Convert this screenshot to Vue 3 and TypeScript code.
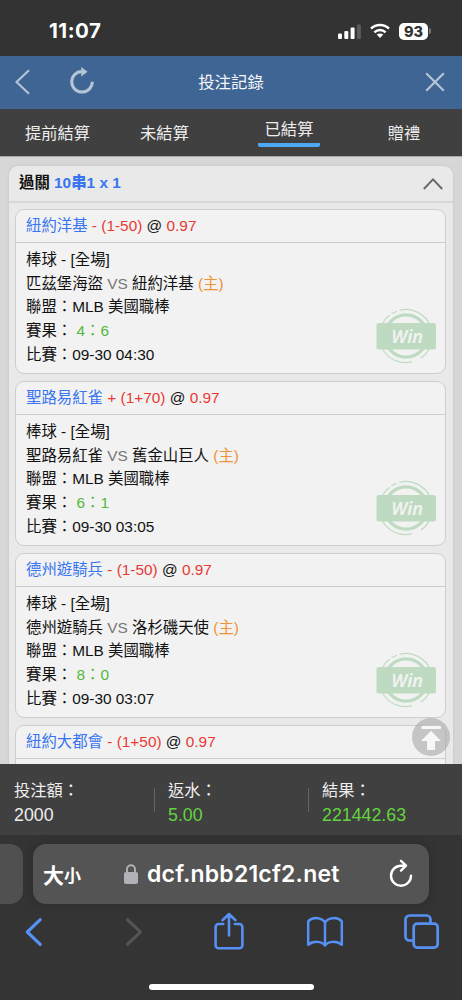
<script setup lang="ts">
interface Details {
  home: string
  away: string
  a: number
  b: number
  time: string
}
interface Bet {
  pick: string
  sign: string
  line: string
  details?: Details
}

const tabs: string[] = ['提前結算', '未結算', '已結算', '贈禮']
const activeTab = 2

const bets: Bet[] = [
  { pick: '紐約洋基', sign: '-', line: '(1-50)', details: { away: '匹茲堡海盜', home: '紐約洋基', a: 4, b: 6, time: '09-30 04:30' } },
  { pick: '聖路易紅雀', sign: '+', line: '(1+70)', details: { away: '聖路易紅雀', home: '舊金山巨人', a: 6, b: 1, time: '09-30 03:05' } },
  { pick: '德州遊騎兵', sign: '-', line: '(1-50)', details: { away: '德州遊騎兵', home: '洛杉磯天使', a: 8, b: 0, time: '09-30 03:07' } },
  { pick: '紐約大都會', sign: '-', line: '(1+50)' },
]

const totals = [
  { label: '投注額：', value: '2000', win: false },
  { label: '返水：', value: '5.00', win: true },
  { label: '結果：', value: '221442.63', win: true },
]
</script>

<template>
  <div class="phone">
    <div class="status">
      <span class="clock">11:07</span>
      <div class="indicators">
        <svg class="signal" width="24" height="16" viewBox="0 0 24 16">
          <rect x="0" y="9.5" width="4" height="5.5" rx="1" fill="#fff" />
          <rect x="6.3" y="7" width="4" height="8" rx="1" fill="#fff" />
          <rect x="12.6" y="3.5" width="4" height="11.5" rx="1" fill="#fff" />
          <rect x="18.9" y="0.5" width="4" height="14.5" rx="1" fill="#5c5c5c" />
        </svg>
        <svg class="wifi" width="20" height="16" viewBox="0 0 20 16">
          <g fill="none" stroke="#fff" stroke-width="2.5">
            <path d="M1 5.6C6 .8 14 .8 19 5.6" />
            <path d="M4.4 9.3c3.2-3 8-3 11.2 0" />
          </g>
          <path d="M6.7 11.6c1.9-1.6 4.7-1.6 6.6 0L10 15z" fill="#fff" />
        </svg>
        <span class="battery">93</span>
        <span class="nub"></span>
      </div>
    </div>

    <header class="titlebar">
      <svg class="back" width="16" height="26" viewBox="0 0 16 26"><path d="M14 1.3 1.5 13 14 24.7" /></svg>
      <svg class="reload" width="26" height="28" viewBox="0 0 26 28">
        <path class="arc" d="M13 4.5A10.3 10.3 0 1 0 23.3 14.8" />
        <path class="head" d="M12.2 0 18.6 4.8 12.2 9.6z" />
      </svg>
      <h1>投注記錄</h1>
      <svg class="close" width="20" height="20" viewBox="0 0 20 20"><path d="M1.2 1.2l17.6 17.6M18.8 1.2 1.2 18.8" /></svg>
    </header>

    <nav class="tabs">
      <div v-for="(t, i) in tabs" :key="t" class="tab" :class="{ active: i === activeTab }"><span>{{ t }}</span></div>
    </nav>

    <main class="content">
      <section class="panel">
        <div class="panel-head">
          <span>過關 <b>10串1 x 1</b></span>
          <svg width="20" height="12" viewBox="0 0 20 12"><path d="M.8 11 10 1.4 19.2 11" fill="none" stroke="#666" stroke-width="1.9" /></svg>
        </div>
        <article v-for="bet in bets" :key="bet.pick" class="bet">
          <div class="bet-head"><span class="blue">{{ bet.pick }}</span> <span class="red">{{ bet.sign }} {{ bet.line }}</span> @ <span class="red">0.97</span></div>
          <div v-if="bet.details" class="bet-body">
            <p>棒球 - [全場]</p>
            <p>{{ bet.details.away }} <span class="gray">VS</span> {{ bet.details.home }} <span class="orange">(主)</span></p>
            <p>聯盟：MLB 美國職棒</p>
            <p>賽果： <span class="green">{{ bet.details.a }}：{{ bet.details.b }}</span></p>
            <p>比賽：{{ bet.details.time }}</p>
            <svg class="stamp" width="60" height="56" viewBox="0 0 60 56">
              <g fill="none" stroke="#bedbc1">
                <circle cx="30" cy="28" r="21.2" stroke-width="3.2" />
                <path stroke-width="1.2" d="M23.5 2.3A26.5 26.5 0 0 1 54.5 18M20.8 3.2 15.5 5.7M13.5 7.3A26.5 26.5 0 0 0 6.3 16M6 40A26.5 26.5 0 0 0 36 53.9M45 50A26.5 26.5 0 0 0 54 39" />
              </g>
              <rect x="0.5" y="15" width="59.5" height="26.5" rx="2.5" fill="#bedbc1" />
              <text x="31.2" y="34.6" text-anchor="middle">Win</text>
            </svg>
          </div>
        </article>
      </section>
      <svg class="top" width="38" height="38" viewBox="0 0 38 38">
        <circle cx="19" cy="19" r="19" fill="#aaa" fill-opacity=".62" />
        <rect x="9.2" y="7.8" width="20" height="3.2" rx="1.6" fill="#f7f7f7" />
        <path d="M19 12.8 29 23h-6v9h-8v-9H9z" fill="#f7f7f7" />
      </svg>
    </main>

    <footer class="totals">
      <div v-for="t in totals" :key="t.label" class="total">
        <span class="label">{{ t.label }}</span>
        <span class="value" :class="{ win: t.win }">{{ t.value }}</span>
      </div>
    </footer>

    <div class="browser">
      <div class="address-row">
        <div class="prev-tab"></div>
        <div class="address">
          <span class="aa">大</span><span class="aa small">小</span>
          <svg class="lock" width="14" height="20" viewBox="0 0 14 20">
            <path d="M3 9V5.3a4 4 0 0 1 8 0V9" fill="none" stroke="#b2b1b7" stroke-width="1.9" />
            <rect x="0" y="8" width="14" height="12" rx="2" fill="#b2b1b7" />
          </svg>
          <span class="url">dcf.nbb21cf2.net</span>
          <svg class="refresh" width="24" height="28" viewBox="0 0 24 28">
            <path d="M16.5 6.7H12A10 10 0 1 0 22 16.7M12 1.8 17 6.7 12 11.6" />
          </svg>
        </div>
      </div>
      <div class="toolbar">
        <svg class="t1" width="18" height="30" viewBox="0 0 18 30"><path stroke-width="3.2" d="M15.2 2.7 2.3 15l12.9 12.3" /></svg>
        <svg class="t2" width="18" height="30" viewBox="0 0 18 30"><path stroke-width="3" d="M2.5 2.7 15.5 15 2.5 27.3" /></svg>
        <svg class="t3" width="30" height="38" viewBox="0 0 30 38">
          <path stroke-width="2.6" d="M9.2 12H4.6a3 3 0 0 0-3 3v18.2a3 3 0 0 0 3 3h20.8a3 3 0 0 0 3-3V15a3 3 0 0 0-3-3h-4.6M15 23.5V2.2M8.5 8.2 15 2l6.5 6.2" />
        </svg>
        <svg class="t4" width="38" height="32" viewBox="0 0 38 32">
          <path stroke-width="2.5" d="M19 6.5C16 1.2 6.5.6 2.2 5.3v23.5C7 24.8 15 24.8 19 29.4 23 24.8 31 24.8 35.8 28.8V5.3C31.5.6 22 1.2 19 6.5zM19 6.5v22.9" />
        </svg>
        <svg class="t5" width="36" height="36" viewBox="0 0 36 36">
          <rect x="9.7" y="9.7" width="24" height="24" rx="3.6" stroke-width="2.7" />
          <path stroke-width="2.7" d="M9.5 26.5H5.5a4 4 0 0 1-4-4v-17a4 4 0 0 1 4-4h17a4 4 0 0 1 4 4v4" />
        </svg>
      </div>
      <div class="home"></div>
    </div>
  </div>
</template>

<style>
body {
  background: #343434;
}
</style>

<style scoped>
.phone {
  width: 462px;
  height: 1000px;
  display: flex;
  flex-direction: column;
  overflow: hidden;
  background: #343434;
  color: #111;
  font-family: "Liberation Sans", "Noto Sans CJK TC", sans-serif;
}
svg {
  display: block;
  flex: none;
}
.status {
  height: 56px;
  flex: none;
  box-sizing: border-box;
  padding: 6px 31px 0 49px;
  background: #333;
  display: flex;
  align-items: center;
  justify-content: space-between;
}
.clock {
  font: 700 20.5px/24px Inter, sans-serif;
  letter-spacing: 0.5px;
  color: #fff;
}
.indicators {
  display: flex;
  align-items: center;
}
.signal {
  margin: 1px 1px 0 0;
}
.wifi {
  margin-left: 7px;
}
.battery {
  width: 29px;
  height: 17px;
  margin-left: 9px;
  border-radius: 5px;
  background: #fff;
  color: #333;
  font: 800 14.5px/17px Inter, sans-serif;
  text-align: center;
}
.nub {
  width: 2px;
  height: 6px;
  margin-left: 1px;
  border-radius: 0 2px 2px 0;
  background: #777;
}
.titlebar {
  height: 53px;
  flex: none;
  box-sizing: border-box;
  display: flex;
  align-items: center;
  padding: 0 17px 0 15px;
  background: #3f6594;
}
.back path,
.close path {
  fill: none;
  stroke: #b5c4d7;
  stroke-width: 2.2;
}
.back {
  margin-top: -1px;
}
.reload {
  margin: -4px 0 0 38px;
}
.close {
  margin-top: -1px;
}
.arc {
  fill: none;
  stroke: #b5c4d7;
  stroke-width: 3;
}
.head {
  fill: #b5c4d7;
}
h1 {
  flex: 1;
  margin: -2px 0 0;
  padding-right: 58px;
  color: #f4f6f9;
  font-size: 16.4px;
  font-weight: 400;
  line-height: 24px;
  text-align: center;
}
.tabs {
  height: 47px;
  flex: none;
  display: grid;
  grid-template-columns: 115px 99px 150px 80px;
  background: #404040;
  color: #eee;
  font-size: 16.3px;
  line-height: 24px;
}
.tab {
  padding-top: 11.5px;
  text-align: center;
}
.tab span {
  display: inline-block;
}
.tab.active {
  padding-top: 8px;
}
.active span {
  width: 62px;
  height: 30px;
  border-radius: 2px;
  background: linear-gradient(#4ca8f3, #4ca8f3) bottom / 100% 4px no-repeat;
}
.content {
  flex: 1;
  min-height: 0;
  position: relative;
  overflow: hidden;
  box-sizing: border-box;
  padding: 10px 9px 0;
  background: #d7d7d7;
  box-shadow: inset 0 1px 0 #aaa;
}
.panel {
  padding-bottom: 10px;
  border-radius: 9px 9px 0 0;
  background: #e9e9e9;
  box-shadow: 0 0 3px #c2c2c2;
}
.panel-head {
  height: 37px;
  box-sizing: border-box;
  margin-bottom: 6px;
  padding: 0 10px;
  border-bottom: 2px solid #d8d8d8;
  display: flex;
  align-items: center;
  justify-content: space-between;
  font-size: 15.4px;
  font-weight: 700;
}
.panel-head span {
  line-height: 22px;
  padding-bottom: 1px;
}
.panel-head b,
.blue {
  color: #3975f0;
}
.bet {
  height: 165px;
  box-sizing: border-box;
  margin: 0 7px 7px 6px;
  border: 1px solid #cdcdcd;
  border-radius: 9px;
  background: #f2f2f2;
  font-size: 15.4px;
}
.bet-head {
  height: 33px;
  box-sizing: border-box;
  padding-left: 10px;
  border-bottom: 1px solid #cdcdcd;
  line-height: 31px;
  white-space: nowrap;
}
.bet-body {
  position: relative;
  padding: 5px 10px 1px;
}
.bet-body p {
  height: 23.7px;
  margin: 0;
  line-height: 23.7px;
  white-space: nowrap;
}
.red {
  color: #e93a32;
}
.gray {
  color: #777;
}
.orange {
  color: #f09236;
}
.green {
  color: #52b83b;
}
.stamp {
  position: absolute;
  right: 9px;
  bottom: 3px;
}
.stamp text {
  fill: #f2f2f2;
  font: italic 600 18px "Noto Sans", "Open Sans", sans-serif;
}
.top {
  position: absolute;
  right: 12px;
  bottom: 8px;
}
.totals {
  height: 71px;
  flex: none;
  display: grid;
  grid-template-columns: repeat(3, 154px);
  background: #404040;
  color: #eee;
}
.total {
  display: flex;
  flex-direction: column;
  padding: 14px 0 0 14px;
  background: linear-gradient(#646464, #646464) left 24px / 1px 24px no-repeat;
}
.total:first-child {
  background: none;
}
.label {
  font-size: 16.3px;
  line-height: 24px;
}
.value {
  font-size: 17.8px;
  line-height: 26px;
}
.win {
  color: #63d33f;
}
.browser {
  height: 165px;
  flex: none;
  background: #343434;
}
.address-row {
  display: flex;
  gap: 10px;
  padding-top: 9px;
}
.prev-tab {
  width: 23px;
  height: 60px;
  border-radius: 0 13px 13px 0;
  background: #505050;
}
.address {
  width: 396px;
  height: 60px;
  box-sizing: border-box;
  padding-left: 10px;
  border-radius: 13px;
  background: #545454;
  box-shadow: 0 0 8px #2a2a2a;
  display: flex;
  align-items: center;
  color: #fff;
}
.aa {
  width: 21px;
  font: 700 21px/30px "Noto Sans CJK TC", sans-serif;
  white-space: nowrap;
}
.aa.small {
  width: 60px;
  padding-top: 2px;
  font-size: 17px;
}
.url {
  width: 251px;
  padding-left: 9px;
  box-sizing: border-box;
  font: 600 23px/30px Inter, sans-serif;
  letter-spacing: 0.2px;
  white-space: nowrap;
}
.refresh {
  margin-top: -2px;
}
.refresh path {
  fill: none;
  stroke: #fff;
  stroke-width: 2.4;
  stroke-linecap: round;
  stroke-linejoin: round;
}
.toolbar {
  height: 60px;
  box-sizing: border-box;
  display: flex;
  align-items: flex-start;
  padding: 7px 23px 0 25px;
}
.toolbar svg {
  fill: none;
  stroke: #5690f5;
  stroke-linecap: round;
  stroke-linejoin: round;
}
.toolbar .t1 {
  margin-top: 6px;
}
.toolbar .t2 {
  margin: 6px 0 0 82px;
  stroke: #555;
}
.toolbar .t3 {
  margin: 1px 0 0 71px;
}
.toolbar .t4 {
  margin: 5px 0 0 62px;
}
.toolbar .t5 {
  margin: 3px 0 0 60px;
}
.home {
  width: 165px;
  height: 6px;
  margin: 20px 0 0 149px;
  border-radius: 3px;
  background: #fff;
}
</style>
